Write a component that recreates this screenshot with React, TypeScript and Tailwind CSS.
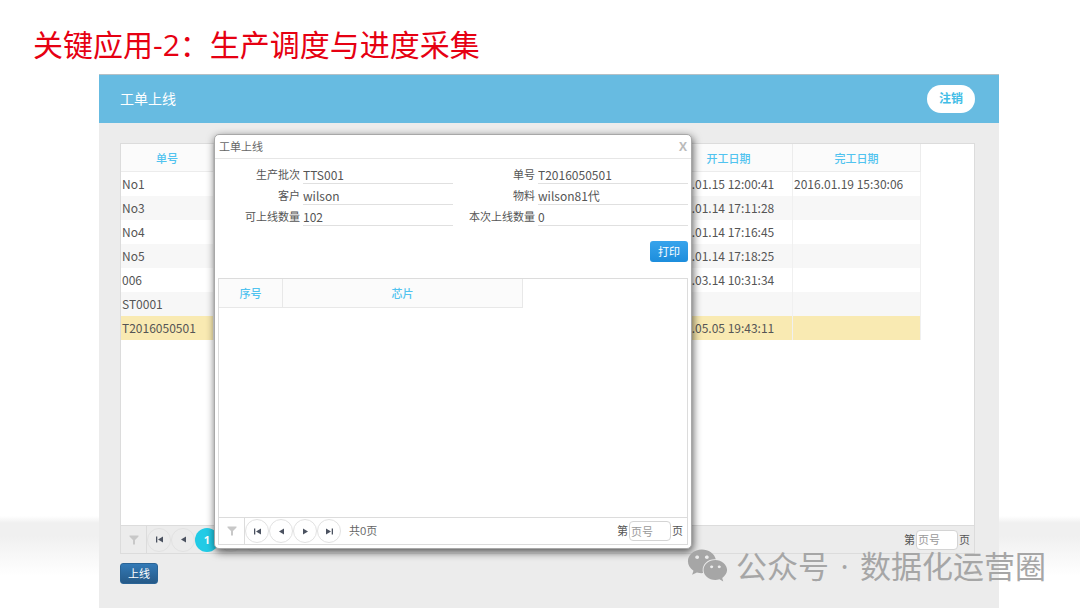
import React, { useState } from 'react';
import { FaWeixin } from 'react-icons/fa';
import clsx from 'clsx';

interface WorkOrder {
  id: string;
  start: string;
  end: string;
}

const orders: WorkOrder[] = [
  { id: 'No1', start: '2016.01.15 12:00:41', end: '2016.01.19 15:30:06' },
  { id: 'No3', start: '2016.01.14 17:11:28', end: '' },
  { id: 'No4', start: '2016.01.14 17:16:45', end: '' },
  { id: 'No5', start: '2016.01.14 17:18:25', end: '' },
  { id: '006', start: '2016.03.14 10:31:34', end: '' },
  { id: 'ST0001', start: '', end: '' },
  { id: 'T2016050501', start: '2016.05.05 19:43:11', end: '' },
];

const fields = [
  { id: 'batch', label: '生产批次', value: 'TTS001' },
  { id: 'order', label: '单号', value: 'T2016050501' },
  { id: 'customer', label: '客户', value: 'wilson' },
  { id: 'material', label: '物料', value: 'wilson81代' },
  { id: 'available', label: '可上线数量', value: '102' },
  { id: 'quantity', label: '本次上线数量', value: '0' },
];

const arrows = {
  first: 'M1 1.5h1.3v6H1zM8 1.5v6L3 4.5z',
  prev: 'M7 1.5v6L2 4.5z',
  next: 'M2 1.5v6l5-3z',
  last: 'M1 1.5v6l5-3zM6.7 1.5H8v6H6.7z',
};

const PagerButton: React.FC<{ icon: keyof typeof arrows }> = ({ icon }) => (
  <button
    type="button"
    aria-label={icon}
    className="flex size-6 items-center justify-center rounded-full border border-[#e2e2e2] text-[#4b5260]"
  >
    <svg viewBox="0 0 9 9" className="size-[9px]" fill="currentColor">
      <path d={arrows[icon]} />
    </svg>
  </button>
);

const FilterButton = () => (
  <button
    type="button"
    aria-label="filter"
    className="flex w-[26px] items-center justify-center self-stretch border-r border-[#dcdcdc] text-[#c8c8c8]"
  >
    <svg viewBox="0 0 10 10" className="size-[10px]" fill="currentColor">
      <path d="M0.5 0.5h9v1L6 5v4.5H4V5L0.5 1.5z" />
    </svg>
  </button>
);

const PageJump = () => (
  <label className="ml-auto mr-1 flex items-center">
    第
    <input
      type="text"
      placeholder="页号"
      className="mx-px h-5 w-[42px] rounded border border-[#d4d4d4] bg-white px-px placeholder:text-[#999]"
    />
    页
  </label>
);

interface OrderDialogProps {
  onClose: () => void;
}

const OrderDialog: React.FC<OrderDialogProps> = ({ onClose }) => (
  <div
    role="dialog"
    aria-labelledby="dialog-title"
    className="absolute left-[115px] top-[60px] w-[478px] rounded-[5px] border border-[#a8a8a8] bg-white shadow-[1px_3px_9px_rgba(0,0,0,0.65)]"
  >
    <div className="flex h-6 items-center justify-between border-b border-[#e6e6e6] px-1">
      <h2 id="dialog-title" className="text-[#666]">工单上线</h2>
      <button type="button" aria-label="close" onClick={onClose} className="text-xs font-bold text-[#bbb]">
        X
      </button>
    </div>

    <div className="px-[3px] pb-[3px]">
      <div className="grid grid-cols-2 gap-y-[3px] pt-[7px]">
        {fields.map((field) => (
          <div key={field.id} className="flex items-center">
            <label htmlFor={field.id} className="w-[82px] shrink-0 text-right">{field.label}</label>
            <input
              id={field.id}
              readOnly
              value={field.value}
              className={clsx(
                "ml-[3px] h-[18px] min-w-0 flex-1 border-b border-[#e0e0e0] text-xs [font-family:'Noto_Sans_CJK_SC',sans-serif]",
                // left-hand fields stop short of the second column of labels
                ['batch', 'customer', 'available'].includes(field.id) && 'max-w-[151px]'
              )}
            />
          </div>
        ))}
      </div>

      <div className="mb-4 mt-[15px] flex justify-end">
        <button
          type="button"
          className="h-[21px] rounded-[3px] bg-linear-to-b from-[#37a4ec] to-[#1c8ddc] px-[8px] text-white"
        >
          打印
        </button>
      </div>

      <div className="flex flex-col border border-[#dcdcdc]">
        <div className="min-h-[238px]">
          <table className="table-fixed border-separate border-spacing-0">
            <thead>
              <tr className="h-[29px] bg-[#fbfbfb] text-[#51c3ef]">
                <th className="w-16 border-b border-r border-[#e8e8e8] pt-0.5 font-medium">序号</th>
                <th className="w-60 border-b border-r border-[#e8e8e8] pt-0.5 font-medium">芯片</th>
              </tr>
            </thead>
          </table>
        </div>
        <div className="flex h-[27px] items-center border-t border-[#dcdcdc]">
          <FilterButton />
          <PagerButton icon="first" />
          <PagerButton icon="prev" />
          <PagerButton icon="next" />
          <PagerButton icon="last" />
          <span className="ml-2 text-[#666]">共0页</span>
          <PageJump />
        </div>
      </div>
    </div>
  </div>
);

const App: React.FC = () => {
  const [dialogOpen, setDialogOpen] = useState(true);
  const [selected, setSelected] = useState('T2016050501');

  return (
    <div className="relative flex min-h-screen flex-col bg-white bg-[linear-gradient(to_top,#fff_32px,#f7f7f7_54px,#f0f0f0_72px,#f0f0f0_85px,#fff_92px)] text-[11px] leading-4 text-[#555] [font-family:'Open_Sans','Noto_Sans_CJK_SC',sans-serif]">
      <h1 className="px-[33px] pb-[9px] pt-[25px] text-[30px] leading-10 text-[#e60012]">
        关键应用-2：生产调度与进度采集
      </h1>

      <div className="relative ml-[99px] mr-[81px] flex flex-1 flex-col bg-[#ececec]">
        <header className="flex h-[49px] items-center justify-between border-t border-[#b4c0c6] bg-[#67bbe1] pl-[21px] pr-6">
          <span className="text-sm text-white">工单上线</span>
          <button type="button" className="h-7 rounded-full bg-white px-3 text-xs font-bold text-[#42bde6]">
            注销
          </button>
        </header>

        <main className="flex flex-1 flex-col items-start pb-6 pl-[21px] pr-6 pt-5">
          <div className="flex w-full flex-1 flex-col border border-[#dcdcdc]">
            <div className="flex-1 bg-white">
              <table className="w-[800px] table-fixed border-separate border-spacing-0">
                <thead>
                  <tr className="h-7 bg-[#fbfbfb] text-[#51c3ef]">
                    <th className="w-[93px] border-b border-r border-[#ececec] pt-0.5 font-medium">单号</th>
                    <td className="border-b border-r border-[#ececec]" />
                    <th className="w-32 border-b border-r border-[#ececec] pt-0.5 font-medium">开工日期</th>
                    <th className="w-32 border-b border-r border-[#ececec] pt-0.5 font-medium">完工日期</th>
                  </tr>
                </thead>
                <tbody className="text-xs leading-4 [font-family:'Noto_Sans_CJK_SC',sans-serif]">
                  {orders.map((order) => (
                    <tr
                      key={order.id}
                      onClick={() => setSelected(order.id)}
                      className={clsx(
                        'h-6',
                        order.id === selected ? 'bg-[#f9eab2]' : 'odd:bg-white even:bg-[#f7f7f7]'
                      )}
                    >
                      <td className="border-r border-[#f0f0f0] pl-px">{order.id}</td>
                      <td className="border-r border-[#f0f0f0]" />
                      <td className="border-r border-[#f0f0f0]">{order.start}</td>
                      <td className="border-r border-[#f0f0f0] pl-px">{order.end}</td>
                    </tr>
                  ))}
                </tbody>
              </table>
            </div>

            <div className="flex h-7 items-center border-t border-[#dcdcdc]">
              <FilterButton />
              <PagerButton icon="first" />
              <PagerButton icon="prev" />
              <button type="button" className="size-6 rounded-full bg-[#22cbe6] font-bold text-white">1</button>
              <PagerButton icon="next" />
              <PagerButton icon="last" />
              <PageJump />
            </div>
          </div>

          <button
            type="button"
            onClick={() => setDialogOpen(true)}
            className="mt-[9px] h-[21px] rounded-[3px] border border-[#2a6496] bg-linear-to-b from-[#337ab7] to-[#265a88] px-[7px] text-white"
          >
            上线
          </button>
        </main>

        {dialogOpen && <OrderDialog onClose={() => setDialogOpen(false)} />}
      </div>

      <div className="pointer-events-none absolute bottom-[22px] right-[34px] flex items-center text-[31px] leading-8 text-[#a6a6a6]">
        <FaWeixin className="mr-2 size-[41px]" />
        <span>公众号</span>
        <span className="w-[31px] text-center">·</span>
        <span>数据化运营圈</span>
      </div>
    </div>
  );
};

export default App;
